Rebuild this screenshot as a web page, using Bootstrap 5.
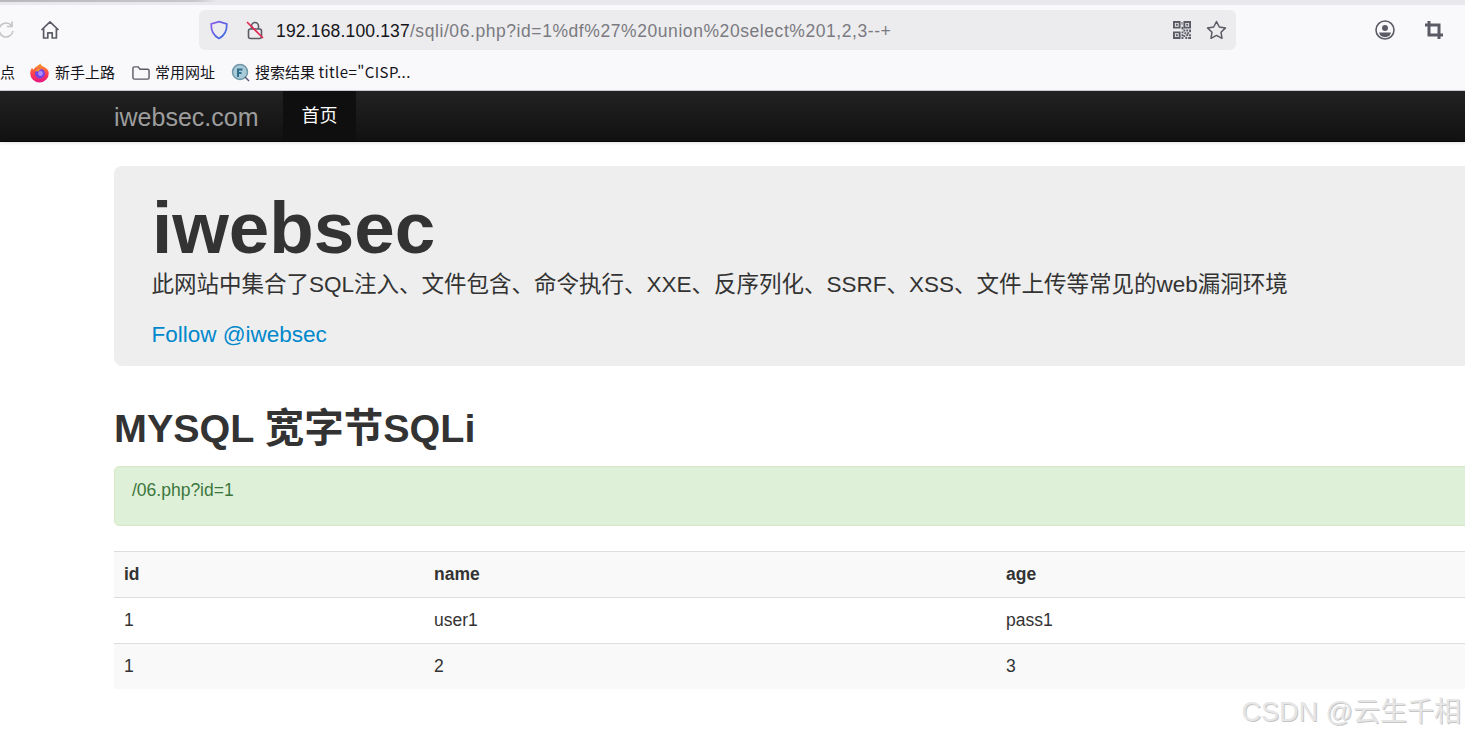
<!DOCTYPE html>
<html lang="zh-CN">
<head>
<meta charset="utf-8">
<title>iwebsec</title>
<link href="https://cdn.jsdelivr.net/npm/bootstrap@5.3.0/dist/css/bootstrap.min.css" rel="stylesheet">
<style>
html,body{height:738px;overflow:hidden;background:#fff}
body{font-family:"Liberation Sans","Noto Sans CJK SC",sans-serif;color:#333;position:relative;width:1465px}
.tab-strip{height:5px;background:#e9e9ed;position:relative}
.tab-shadow{position:absolute;left:0;top:0;width:218px;height:2px;background:linear-gradient(90deg,#b9b9bd,#c8c8cc 90%,#e9e9ed);}
.tool-row{height:52px;background:#f9f9fb;padding:5px 0 7px}
.tool-reload{width:16px;margin-left:-2px;margin-right:26px}
.url-box{width:1037px;height:40px;margin-left:139px;background:#ececee;border-radius:6px;padding:0 9px 0 11px}
.url-lock{margin-left:18px}
.url-text{font-size:17.5px;color:#7a7a80;margin-left:12px;padding-top:2px;letter-spacing:.17px;white-space:nowrap;font-family:"Liberation Sans","Noto Sans",sans-serif}
.url-path{letter-spacing:.57px}
.url-host{color:#15141a}
.url-tools{gap:15px}
.tool-right{margin-left:139px;gap:30px}
.book-row{height:34px;background:#f9f9fb;border-bottom:1px solid #cfcfd8;padding-bottom:2px;font-size:15px;color:#15141a;white-space:nowrap;font-family:"Noto Sans CJK SC","Liberation Sans",sans-serif}
.book-cut{width:30px;overflow:hidden}
.book-item{margin-right:16px;gap:5px}
.book-first{gap:6px;margin-right:17px}
.book-latin{letter-spacing:.42px}
.site-nav{height:51px;background:linear-gradient(#222,#111);padding:0 0 0 114px;border-bottom:1px solid #080808;box-shadow:0 1px 3px rgba(0,0,0,.12)}
.site-brand{font-size:25px;color:#9d9d9d;margin-right:25px;line-height:52px;width:144px}
.site-home{width:73px;height:50px;background:#0f0f0f;color:#fff;font-size:18px;line-height:50px;text-align:center}
.page-wrap{margin-left:114px;width:1480px;padding-top:24px}
.hero{height:200px;background:#eee;border-radius:8px;padding:17px 38px 0;margin-bottom:40px}
.hero-title{font-size:72.8px;font-weight:700;line-height:90px;margin:0;color:#333}
.hero-sub{font-size:22.5px;line-height:32px;margin:-4px 0 18px -.6px;color:#333}
.hero-link{font-size:22.5px;line-height:32px;margin-left:-.6px;color:#0088cc;text-decoration:none;display:block}
.sec-title{font-size:39.5px;font-weight:700;line-height:44px;margin:0 0 16px;height:44px;color:#333}
.note-box{height:60px;background:#dff0d8;border:1px solid #d6e9c6;border-radius:5px;color:#3c763d;font-size:17.5px;padding:12px 17px;line-height:22px;margin-bottom:25px}
.data-grid{width:100%;table-layout:fixed;border-collapse:collapse;font-size:17.5px;color:#333}
.data-grid th,.data-grid td{height:46px;padding:0 10px 2px;border-top:1px solid #ddd;line-height:22px;vertical-align:middle}
.data-grid .shade{background:#f9f9f9}
.data-grid .row-end td{height:45px;padding-bottom:0}
.col-a{width:310px}.col-b{width:572px}
.mark-csdn{position:absolute;right:4px;top:694px;font-size:27px;line-height:36px;color:#e6e6e6;text-shadow:1px 1px 0 #c6c6c6;font-family:"Liberation Sans","Noto Sans CJK SC",sans-serif;white-space:nowrap}
svg{display:block;flex:none}
</style>
</head>
<body>
<div class="tab-strip"><div class="tab-shadow"></div></div>
<div class="tool-row d-flex align-items-center">
  <svg class="tool-reload" width="16" height="20" viewBox="0 0 16 20" fill="none" stroke="#c4c4c8" stroke-width="1.6"><path d="M13.5 5.5A7 7 0 1 0 15 11"/><path d="M14 1.5v5h-5" /></svg>
  <svg width="20" height="20" viewBox="0 0 20 20" fill="none" stroke="#5b5b66" stroke-width="1.7" stroke-linejoin="round"><path d="M1.5 10 10 1.8 18.5 10M3.6 8.4V18h4.2v-5.2h4.4V18h4.2V8.4"/></svg>
  <div class="url-box d-flex align-items-center">
    <svg width="18" height="20" viewBox="0 0 18 20" fill="none" stroke-width="1.7"><defs><linearGradient id="sg" x1="0" y1="0" x2="1" y2="1"><stop offset="0" stop-color="#8f5ce8"/><stop offset="1" stop-color="#2f6ae0"/></linearGradient></defs><path stroke="url(#sg)" d="M9 1.6 16.8 4c.2 7-2 11.600-7.800 14.400C3.200 15.600 1 11 1.200 4z"/></svg>
    <svg class="url-lock" width="18" height="20" viewBox="0 0 18 20" fill="none" stroke="#5b5b66" stroke-width="1.6"><path d="M5.500 9V6a3.500 3.500 0 0 1 7 0v3"/><rect x="2.500" y="9" width="13" height="9.500" rx="2"/><path stroke="#e22850" d="M1 2l16 16"/></svg>
    <span class="url-text"><span class="url-host">192.168.100.137</span><span class="url-path">/sqli/06.php?id=1%df%27%20union%20select%201,2,3--+</span></span>
    <div class="url-tools ms-auto d-flex align-items-center">
      <svg width="18" height="18" viewBox="0 0 19 19" fill="#5b5b66"><path fill-rule="evenodd" d="M0 0h8v8H0zM2 2v4h4V2zM11 0h8v8h-8zM13 2v4h4V2zM0 11h8v8H0zM2 13v4h4v-4z"/><path d="M3 3h2v2H3zM14 3h2v2h-2zM3 14h2v2H3zM9 1h1v3H9zM9 6h2v3H9zM11 9h2v2h-2zM14 9h2v2h-2zM17 9h2v3h-2zM9 11h2v2H9zM12 12h2v2h-2zM15 12h2v2h-2zM9 14h2v2H9zM11 15h2v2h-2zM14 14h2v2h-2zM17 14h2v2h-2zM9 17h2v2H9zM13 17h2v2h-2zM16 17h3v2h-3z"/></svg>
      <svg width="21" height="20" viewBox="0 0 21 20" fill="none" stroke="#5b5b66" stroke-width="1.5" stroke-linejoin="round"><path d="M10.500 1.500 13.300 7l6.200.9-4.500 4.300 1 6.100-5.500-2.900-5.500 2.900 1-6.100L1.500 7.900 7.700 7z"/></svg>
    </div>
  </div>
  <div class="tool-right d-flex align-items-center">
    <svg width="20" height="20" viewBox="0 0 20 20" fill="none"><circle cx="10" cy="10" r="9" stroke="#5b5b66" stroke-width="1.600"/><circle cx="10" cy="8" r="3" fill="#5b5b66"/><path d="M4 12.500h12A6.200 6.200 0 0 1 4 12.500z" fill="#5b5b66"/></svg>
    <svg width="18" height="18" viewBox="0 0 18 18" fill="none" stroke="#5b5b66" stroke-width="3"><path d="M4 0v14h14M0 4h14v14"/></svg>
  </div>
</div>
<div class="book-row d-flex align-items-center">
  <span class="book-cut">点</span>
  <div class="book-item book-first d-flex align-items-center">
    <svg width="19" height="20" viewBox="0 0 19 20"><defs><linearGradient id="fx" x1="0" y1="0" x2="0" y2="1"><stop offset="0" stop-color="#ff9a1f"/><stop offset=".55" stop-color="#ff3e50"/><stop offset="1" stop-color="#e31587"/></linearGradient></defs><path fill="url(#fx)" d="M9.500 19.500a9.300 9.300 0 0 1-9.300-9.300c0-2.200.8-4.300 2-5.500.2 1 .6 1.500 1.300 2C5 3.800 8 3 10.500.5c.3 1.800 1.600 2.500 3.200 3.200 3.200 1.400 5.100 3.500 5.100 6.500a9.300 9.300 0 0 1-9.300 9.300z"/><circle cx="10" cy="10.500" r="5" fill="#7542e5"/><circle cx="10.500" cy="10.500" r="2.400" fill="#b38cf5"/><path fill="#ff9a1f" d="M5 8.500c1.500-2.500 5-3.500 7.500-2.500-2 .2-3.500 1-4 2.500C7 8 6 8 5 8.500z"/></svg>
    <span>新手上路</span>
  </div>
  <div class="book-item d-flex align-items-center">
    <svg width="18" height="16" viewBox="0 0 19 16" fill="none" stroke="#5b5b66" stroke-width="1.500"><path d="M1 3a1.500 1.500 0 0 1 1.500-1.500h4L8.500 4h8A1.500 1.500 0 0 1 18 5.500V13a1.500 1.500 0 0 1-1.500 1.500h-14A1.500 1.500 0 0 1 1 13z"/></svg>
    <span>常用网址</span>
  </div>
  <div class="book-item d-flex align-items-center">
    <svg width="19" height="19" viewBox="0 0 19 19"><circle cx="9" cy="9" r="7.500" fill="#a9cbd8" stroke="#6f97a8" stroke-width="1.500"/><path d="M7 14V6.500h4.500M7 10h3.500" fill="none" stroke="#2f6f8c" stroke-width="2"/><path d="M14 14l4 4" stroke="#557" stroke-width="1.500"/></svg>
    <span>搜索结果 <span class="book-latin">title="CISP...</span></span>
  </div>
</div>
<nav class="site-nav d-flex">
  <span class="site-brand">iwebsec.com</span>
  <span class="site-home">首页</span>
</nav>
<main class="page-wrap">
  <div class="hero">
    <h1 class="hero-title">iwebsec</h1>
    <p class="hero-sub">此网站中集合了SQL注入、文件包含、命令执行、XXE、反序列化、SSRF、XSS、文件上传等常见的web漏洞环境</p>
    <a class="hero-link" href="#">Follow @iwebsec</a>
  </div>
  <h2 class="sec-title">MYSQL 宽字节SQLi</h2>
  <div class="note-box">/06.php?id=1</div>
  <table class="data-grid">
    <colgroup><col class="col-a"><col class="col-b"><col></colgroup>
    <tr class="shade"><th>id</th><th>name</th><th>age</th></tr>
    <tr><td>1</td><td>user1</td><td>pass1</td></tr>
    <tr class="shade row-end"><td>1</td><td>2</td><td>3</td></tr>
  </table>
</main>
<div class="mark-csdn">CSDN @云生千相</div>
<script src="https://cdn.jsdelivr.net/npm/bootstrap@5.3.0/dist/js/bootstrap.bundle.min.js"></script>
</body>
</html>
